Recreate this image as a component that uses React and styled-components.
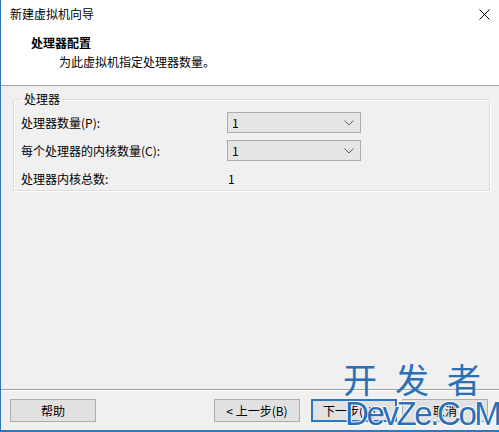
import React from "react";
import styled, { createGlobalStyle } from "styled-components";

const Global = createGlobalStyle`
  html, body { margin: 0; padding: 0; background: #ffffff; overflow: hidden; }
  * { box-sizing: border-box; }
`;

const FONT = `"Noto Sans CJK SC", "Microsoft YaHei", sans-serif`;

const Window = styled.div`
  position: relative;
  width: 499px;
  height: 432px;
  display: flex;
  flex-direction: column;
  border-left: 1px solid #2b78c4;
  border-bottom: 2px solid #2b78c4;
  font-family: ${FONT};
  font-size: 12px;
  color: #000;
  background: #f0f0f0;
`;

const TitleBar = styled.div`
  height: 28px;
  display: flex;
  align-items: center;
  justify-content: space-between;
  background: #fff;
  padding-left: 9px;
`;

const TitleText = styled.span`
  font-size: 12px;
  line-height: 1;
`;

const CloseBtn = styled.div`
  width: 46px;
  height: 28px;
  display: flex;
  align-items: center;
  justify-content: center;
  margin-right: -8px;
`;

const Header = styled.div`
  height: 58px;
  background: #fff;
  border-bottom: 1px solid #a0a0a0;
  padding: 6px 0 0 30px;
  display: flex;
  flex-direction: column;
`;

const HeaderTitle = styled.div`
  font-weight: bold;
  font-size: 12px;
  line-height: 18px;
`;

const HeaderSub = styled.div`
  padding-left: 28px;
  font-size: 12px;
  line-height: 20px;
`;

const Body = styled.div`
  flex: 1;
  display: flex;
  flex-direction: column;
`;

const Group = styled.fieldset`
  margin: 6px 9px 0 12px;
  padding: 0 0 8px 7px;
  border: 1px solid #dcdcdc;
  box-shadow: inset 1px 1px 0 #fff, 1px 1px 0 #fff;
  height: 99px;
  min-width: 0;
`;

const Legend = styled.legend`
  padding: 0 2px 0 3px;
  font-size: 12px;
  line-height: 14px;
`;

const Rows = styled.div`
  display: grid;
  grid-template-columns: 206px 134px;
  row-gap: 7px;
  margin-top: 6px;
  align-items: center;
`;

const Label = styled.span`
  font-size: 12px;
  line-height: 21px;
`;

const Select = styled.div`
  height: 21px;
  border: 1px solid #acacac;
  background: #e5e5e5;
  display: flex;
  align-items: center;
  justify-content: space-between;
  padding: 0 6px 0 4px;
  font-size: 12px;
`;

const Value = styled.span`
  font-size: 12px;
  line-height: 21px;
  padding-left: 1px;
`;

const Spacer = styled.div`
  flex: 1;
`;

const Footer = styled.div`
  border-top: 1px solid #a0a0a0;
  box-shadow: inset 0 1px 0 #fff;
  height: 41px;
  display: flex;
  align-items: flex-start;
  padding: 9px 9px 0 9px;
`;

const Button = styled.div`
  width: ${(p) => p.$w}px;
  height: 23px;
  margin-left: ${(p) => p.$ml || 0}px;
  border: 1px solid ${(p) => (p.$default ? "#2b78c4" : "#adadad")};
  box-shadow: ${(p) => (p.$default ? "inset 0 0 0 1px #2b78c4" : "none")};
  background: #e1e1e1;
  display: flex;
  align-items: center;
  justify-content: center;
  font-size: 12px;
`;

const Watermark = styled.div`
  position: absolute;
  left: 342px;
  top: 362px;
  width: 152px;
  pointer-events: none;
  color: #2b6fb6;
  font-family: "Noto Sans CJK SC", sans-serif;
`;

const WmCn = styled.div`
  font-size: 34px;
  line-height: 34px;
  letter-spacing: 18px;
  white-space: nowrap;
`;

const WmEn = styled.div`
  font-family: "Liberation Sans", Arial, sans-serif;
  font-size: 33px;
  line-height: 30px;
  margin-top: 3px;
  margin-left: 2px;
  white-space: nowrap;
  letter-spacing: -2.4px;
  text-shadow: 1px 0 0 #fff, -1px 0 0 #fff, 0 1px 0 #fff, 0 -1px 0 #fff;
`;

const Chevron = () => (
  <svg width="10" height="6" viewBox="0 0 10 6">
    <path d="M0.5 0.5 L5 5 L9.5 0.5" fill="none" stroke="#606060" strokeWidth="1" />
  </svg>
);

export default function App() {
  return (
    <>
      <Global />
      <Window>
        <TitleBar>
          <TitleText>新建虚拟机向导</TitleText>
          <CloseBtn>
            <svg width="11" height="11" viewBox="0 0 11 11">
              <path d="M0.5 0.5 L10.5 10.5 M10.5 0.5 L0.5 10.5" stroke="#000" strokeWidth="1" />
            </svg>
          </CloseBtn>
        </TitleBar>
        <Header>
          <HeaderTitle>处理器配置</HeaderTitle>
          <HeaderSub>为此虚拟机指定处理器数量。</HeaderSub>
        </Header>
        <Body>
          <Group>
            <Legend>处理器</Legend>
            <Rows>
              <Label>处理器数量(P):</Label>
              <Select>
                <span>1</span>
                <Chevron />
              </Select>
              <Label>每个处理器的内核数量(C):</Label>
              <Select>
                <span>1</span>
                <Chevron />
              </Select>
              <Label>处理器内核总数:</Label>
              <Value>1</Value>
            </Rows>
          </Group>
          <Spacer />
          <Footer>
            <Button $w={86}>帮助</Button>
            <Button $w={86} $ml={118}>&lt; 上一步(B)</Button>
            <Button $w={86} $ml={11} $default>下一步(N) &gt;</Button>
            <Button $w={86} $ml={5}>取消</Button>
          </Footer>
        </Body>
        <Watermark>
          <WmCn>开发者</WmCn>
          <WmEn>DevZe.CoM</WmEn>
        </Watermark>
      </Window>
    </>
  );
}
